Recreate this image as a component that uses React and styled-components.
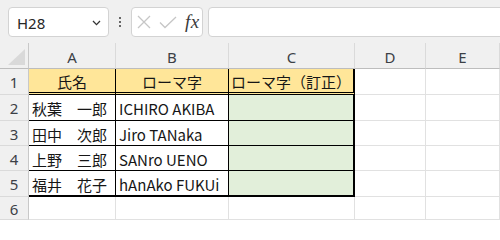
import React from "react";
import styled, { createGlobalStyle } from "styled-components";

const Global = createGlobalStyle`
  html, body {
    margin: 0;
    padding: 0;
    background: #ffffff;
    overflow: hidden;
  }
  body {
    font-family: "Noto Sans CJK JP", "Noto Sans", sans-serif;
  }
`;

const Frame = styled.div`
  width: 500px;
  height: 220px;
  overflow: hidden;
  background: #ffffff;
`;

const Toolbar = styled.div`
  height: 43px;
  box-sizing: border-box;
  padding: 7px 0 6px 8px;
  display: flex;
  align-items: stretch;
  background: #f0f0f0;
  overflow: hidden;
`;

const NameBox = styled.div`
  width: 101px;
  box-sizing: border-box;
  border: 1px solid #d3d3d3;
  border-radius: 4px;
  background: #ffffff;
  display: flex;
  align-items: center;
  justify-content: space-between;
  padding: 1px 7px 0 8px;
  font-family: "Segoe UI", "Noto Sans", "Liberation Sans", sans-serif;
  font-size: 15px;
  color: #262626;
`;

const Dots = styled.div`
  width: 22px;
  display: flex;
  flex-direction: column;
  align-items: center;
  justify-content: center;
  gap: 2px;

  span {
    width: 2px;
    height: 2px;
    border-radius: 1px;
    background: #3a3a3a;
  }
`;

const FxBox = styled.div`
  width: 72px;
  box-sizing: border-box;
  border: 1px solid #d3d3d3;
  border-radius: 4px;
  background: #ffffff;
  display: flex;
  align-items: center;
  padding: 0 0 0 5px;
  gap: 8px;
`;

const FxLabel = styled.span`
  font-family: "Liberation Serif", "DejaVu Serif", serif;
  font-style: italic;
  font-size: 19px;
  color: #3a3a3a;
  letter-spacing: 0.5px;
`;

const FormulaInput = styled.div`
  flex: 1;
  margin-left: 5px;
  margin-right: -8px;
  border: 1px solid #d3d3d3;
  border-radius: 4px;
  background: #ffffff;
`;

const Sheet = styled.div`
  display: grid;
  grid-template-columns: 29px 87px 113px 126px 71px 1fr;
  grid-template-rows: 26px 26px 26px 25px 25px 26px 23px;
`;

const Corner = styled.div`
  background: #f0f0f0;
  border-right: 1px solid #c8c8c8;
  border-bottom: 1px solid #bdbdbd;
  display: flex;
  align-items: flex-end;
  justify-content: flex-end;
  padding: 0 3px 3px 0;
  box-sizing: border-box;
`;

const ColHead = styled.div`
  background: #f0f0f0;
  border-right: 1px solid #dadada;
  border-bottom: 1px solid #bdbdbd;
  display: flex;
  align-items: center;
  justify-content: center;
  padding-top: 2px;
  box-sizing: border-box;
  font-family: "Segoe UI", "Noto Sans", "Liberation Sans", sans-serif;
  font-size: 15px;
  color: #3c4046;
`;

const RowHead = styled.div`
  background: #f0f0f0;
  border-right: 1px solid #c8c8c8;
  border-bottom: 1px solid #dadada;
  display: flex;
  align-items: center;
  justify-content: center;
  padding-top: 1px;
  box-sizing: border-box;
  font-family: "Segoe UI", "Noto Sans", "Liberation Sans", sans-serif;
  font-size: 15px;
  line-height: 18px;
  color: #3c4046;
`;

const Cell = styled.div`
  box-sizing: border-box;
  background: ${(p) => p.$fill || "#ffffff"};
  border-right: ${(p) =>
    p.$edge ? "2px solid #000" : p.$tbl ? "1px solid #000" : "1px solid #e1e1e1"};
  border-bottom: ${(p) =>
    p.$head
      ? "3px double #000"
      : p.$last
      ? "2px solid #000"
      : p.$tbl
      ? "1px solid #000"
      : "1px solid #e1e1e1"};
  display: flex;
  align-items: center;
  justify-content: ${(p) => (p.$center ? "center" : "flex-start")};
  padding: ${(p) => (p.$head ? "1px 0 0 0" : "2px 0 0 3px")};
  font-size: 15px;
  color: #161616;
  white-space: nowrap;
`;

const Chevron = () => (
  <svg width="9" height="6" viewBox="0 0 9 6">
    <path d="M1 1 L4.5 4.6 L8 1" fill="none" stroke="#333" strokeWidth="1.3" />
  </svg>
);

const CrossIcon = () => (
  <svg width="14" height="14" viewBox="0 0 14 14">
    <path d="M1 1 L13 13 M13 1 L1 13" stroke="#c6c6c6" strokeWidth="1.3" fill="none" />
  </svg>
);

const CheckIcon = () => (
  <svg width="18" height="13" viewBox="0 0 18 13">
    <path d="M1 6.5 L6 11.5 L17 1" stroke="#c6c6c6" strokeWidth="1.3" fill="none" />
  </svg>
);

const CornerMark = () => (
  <svg width="17" height="16" viewBox="0 0 17 16">
    <polygon points="17,0 17,16 0,16" fill="#d9d9d9" />
  </svg>
);

const columns = ["A", "B", "C", "D", "E"];

const rows = [
  ["秋葉　一郎", "ICHIRO AKIBA"],
  ["田中　次郎", "Jiro TANaka"],
  ["上野　三郎", "SANro UENO"],
  ["福井　花子", "hAnAko FUKUi"],
];

const Empty = ({ n }) =>
  Array.from({ length: n }).map((_, i) => <Cell key={"e" + i} />);

export default function App() {
  return (
    <Frame>
      <Global />
      <Toolbar>
        <NameBox>
          H28
          <Chevron />
        </NameBox>
        <Dots>
          <span />
          <span />
          <span />
        </Dots>
        <FxBox>
          <CrossIcon />
          <CheckIcon />
          <FxLabel>fx</FxLabel>
        </FxBox>
        <FormulaInput />
      </Toolbar>

      <Sheet>
        <Corner>
          <CornerMark />
        </Corner>
        {columns.map((c) => (
          <ColHead key={c}>{c}</ColHead>
        ))}

        <RowHead>1</RowHead>
        <Cell $tbl $head $center $fill="#ffe699">氏名</Cell>
        <Cell $tbl $head $center $fill="#ffe699">ローマ字</Cell>
        <Cell $tbl $head $edge $center $fill="#ffe699">ローマ字（訂正）</Cell>
        <Empty n={2} />

        {rows.map((r, i) => {
          const last = i === rows.length - 1;
          return (
            <React.Fragment key={r[0]}>
              <RowHead>{i + 2}</RowHead>
              <Cell $tbl $last={last}>{r[0]}</Cell>
              <Cell $tbl $last={last}>{r[1]}</Cell>
              <Cell $tbl $last={last} $edge $fill="#e2efda" />
              <Empty n={2} />
            </React.Fragment>
          );
        })}

        <RowHead>6</RowHead>
        <Empty n={5} />
      </Sheet>
    </Frame>
  );
}
